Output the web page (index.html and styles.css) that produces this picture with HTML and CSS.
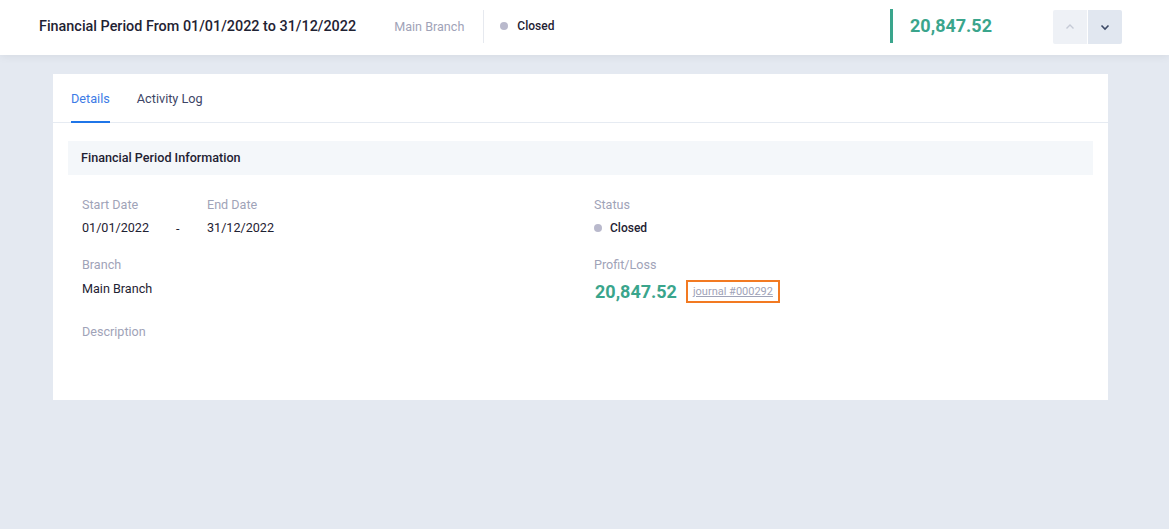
FILE: index.html
```html
<!DOCTYPE html>
<html lang="en">
<head>
  <meta charset="UTF-8" />
  <title>Financial Period</title>
  <link rel="stylesheet" href="styles.css">
</head>
<body>
  <header class="topbar">
    <div class="topbar-left">
      <h1 class="page-title">Financial Period From 01/01/2022 to 31/12/2022</h1>
      <span class="branch">Main Branch</span>
      <span class="status"><i class="dot"></i>Closed</span>
    </div>
    <div class="topbar-right">
      <div class="total">20,847.52</div>
      <div class="nav-btns">
        <button class="nav-btn up" aria-label="Previous">
          <svg width="10" height="10" viewBox="0 0 10 10"><path d="M1.5 6.5 L5 3 L8.5 6.5" fill="none" stroke="#c5cad6" stroke-width="1.4"/></svg>
        </button>
        <button class="nav-btn down" aria-label="Next">
          <svg width="10" height="10" viewBox="0 0 10 10"><path d="M1.5 3.5 L5 7 L8.5 3.5" fill="none" stroke="#3d4a66" stroke-width="1.6"/></svg>
        </button>
      </div>
    </div>
  </header>

  <main class="card">
    <nav class="tabs">
      <a class="tab active">Details</a>
      <a class="tab">Activity Log</a>
    </nav>

    <div class="panel">
      <div class="section-title">Financial Period Information</div>

      <div class="info-grid">
        <div class="col">
          <div class="dates">
            <div class="field">
              <div class="label">Start Date</div>
              <div class="value">01/01/2022</div>
            </div>
            <div class="sep">-</div>
            <div class="field">
              <div class="label">End Date</div>
              <div class="value">31/12/2022</div>
            </div>
          </div>
          <div class="field">
            <div class="label">Branch</div>
            <div class="value">Main Branch</div>
          </div>
          <div class="field desc">
            <div class="label">Description</div>
          </div>
        </div>

        <div class="col">
          <div class="field">
            <div class="label">Status</div>
            <div class="value status-val"><i class="dot"></i>Closed</div>
          </div>
          <div class="field">
            <div class="label">Profit/Loss</div>
            <div class="profit">
              <span class="amount">20,847.52</span>
              <a class="journal" href="#">journal #000292</a>
            </div>
          </div>
        </div>
      </div>
    </div>
  </main>
</body>
</html>
```

FILE: styles.css
```css
body {
  margin: 0;
  background: #e4e9f1;
  font-family: Roboto, "Liberation Sans", sans-serif;
  color: #1f2233;
}

.topbar {
  box-sizing: border-box;
  height: 55px;
  padding: 0 47px 3px 39px;
  background: #fff;
  box-shadow: 0 2px 8px rgba(0,0,0,0.06);
  display: flex;
  align-items: center;
  justify-content: space-between;
}

.topbar-left {
  display: flex;
  align-items: center;
}

.page-title {
  margin: 0;
  font-size: 14.4px;
  font-weight: 500;
  color: #1f2233;
}

.branch {
  font-size: 12.6px;
  color: #9fa3b8;
  margin-left: 38px;
  padding-right: 19px;
  border-right: 1px solid #e6e9ef;
  line-height: 33px;
}

.status {
  display: flex;
  align-items: center;
  font-size: 12px;
  font-weight: 500;
  margin-left: 16px;
  color: #1f2233;
}

.dot {
  display: inline-block;
  width: 8px;
  height: 8px;
  border-radius: 50%;
  background: #b9b9cc;
  margin-right: 9px;
}

.topbar-right {
  display: flex;
  align-items: center;
}

.total {
  border-left: 3px solid #3aa58c;
  padding-left: 17px;
  line-height: 34px;
  font-size: 18px;
  font-weight: 700;
  color: #3aa58c;
  margin-right: 61px;
}

.nav-btns {
  display: flex;
  gap: 1px;
  margin-top: 2px;
}

.nav-btn {
  width: 34px;
  height: 34px;
  border: none;
  padding: 0;
  display: flex;
  align-items: center;
  justify-content: center;
  background: #eef1f6;
}

.nav-btn.up { border-radius: 2px 0 0 2px; }
.nav-btn.down { background: #e1e7f0; border-radius: 0 2px 2px 0; }

.card {
  margin: 19px 61px 0 53px;
  background: #fff;
  height: 326px;
}

.tabs {
  display: flex;
  gap: 27px;
  padding: 0 18px;
  border-bottom: 1px solid #e6ebf2;
  height: 48px;
}

.tab {
  font-size: 12.7px;
  color: #3d4566;
  line-height: 49px;
  height: 49px;
  box-sizing: border-box;
}

.tab.active {
  color: #3c7be6;
  border-bottom: 2px solid #1f75e8;
}

.panel {
  padding: 18px 15px 0;
}

.section-title {
  background: #f4f7fa;
  height: 34px;
  line-height: 34px;
  padding-left: 13px;
  font-size: 12.6px;
  font-weight: 500;
  color: #1f2233;
}

.info-grid {
  display: grid;
  grid-template-columns: 512px 1fr;
  padding: 22px 14px 0;
}

.dates {
  display: flex;
}

.sep {
  font-size: 12.6px;
  padding-top: 24px;
  width: 31px;
}

.dates .field:first-child { width: 94px; }

.field {
  margin-bottom: 21px;
}

.label {
  font-size: 12.6px;
  color: #9fa3b8;
  line-height: 16px;
}

.value {
  font-size: 12.6px;
  color: #1f2233;
  margin-top: 8px;
  line-height: 16px;
}

.dates .value { margin-top: 7px; }

.desc { padding-top: 6px; }

.status-val {
  display: flex;
  align-items: center;
  font-size: 12px;
  font-weight: 500;
  margin-top: 7px;
}

.status-val .dot { margin-right: 8px; }

.profit {
  display: flex;
  align-items: center;
  margin-top: 7px;
}

.amount {
  font-size: 18px;
  font-weight: 700;
  color: #3aa58c;
  margin-left: 1px;
}

.journal {
  margin-left: 9px;
  border: 2px solid #f27a22;
  padding: 3px 5px;
  font-size: 11px;
  color: #9fa3b8;
}
```
